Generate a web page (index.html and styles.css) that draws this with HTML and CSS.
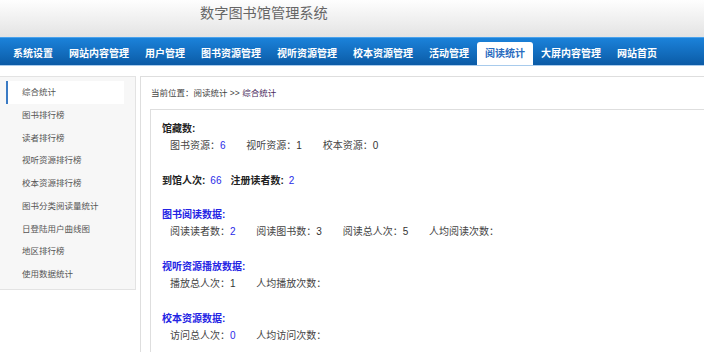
FILE: index.html
```html
<!DOCTYPE html>
<html>
	<head>
		<title>数字图书馆管理系统</title>
		<meta charset="utf-8">
		<link rel="stylesheet" href="styles.css">
	</head>
	<body>
		<header class="top">
			<h1>数字图书馆管理系统</h1>
		</header>
		<nav class="menu">
			<a href="#">系统设置</a>
			<a href="#">网站内容管理</a>
			<a href="#">用户管理</a>
			<a href="#">图书资源管理</a>
			<a href="#">视听资源管理</a>
			<a href="#">校本资源管理</a>
			<a href="#">活动管理</a>
			<a href="#" class="on">阅读统计</a>
			<a href="#">大屏内容管理</a>
			<a href="#">网站首页</a>
		</nav>
		<div class="wrap">
			<aside class="side">
				<a href="#" class="on">综合统计</a>
				<a href="#">图书排行榜</a>
				<a href="#">读者排行榜</a>
				<a href="#">视听资源排行榜</a>
				<a href="#">校本资源排行榜</a>
				<a href="#">图书分类阅读量统计</a>
				<a href="#">日登陆用户曲线图</a>
				<a href="#">地区排行榜</a>
				<a href="#">使用数据统计</a>
			</aside>
			<main class="content">
				<div class="crumb">当前位置：阅读统计 &gt;&gt; <span class="here">综合统计</span></div>
				<div class="box">
					<div class="group">
						<h3>馆藏数:</h3>
						<p class="row">
							<span class="item">图书资源：<span class="val link">6</span></span>
							<span class="item">视听资源：<span class="val">1</span></span>
							<span class="item">校本资源：<span class="val">0</span></span>
						</p>
					</div>
					<div class="group">
						<h3 class="pair">到馆人次:<span class="val link">66</span><span class="sub">注册读者数:</span><span class="val link">2</span></h3>
					</div>
					<div class="group">
						<h3 class="blue">图书阅读数据:</h3>
						<p class="row">
							<span class="item">阅读读者数：<span class="val link">2</span></span>
							<span class="item">阅读图书数：<span class="val">3</span></span>
							<span class="item">阅读总人次：<span class="val">5</span></span>
							<span class="item">人均阅读次数：</span>
						</p>
					</div>
					<div class="group">
						<h3 class="blue">视听资源播放数据:</h3>
						<p class="row">
							<span class="item">播放总人次：<span class="val">1</span></span>
							<span class="item">人均播放次数：</span>
						</p>
					</div>
					<div class="group">
						<h3 class="blue">校本资源数据:</h3>
						<p class="row">
							<span class="item">访问总人次：<span class="val link">0</span></span>
							<span class="item">人均访问次数：</span>
						</p>
					</div>
				</div>
			</main>
		</div>
	</body>
</html>
```
FILE: styles.css
```css
html, body {
	margin: 0;
	padding: 0;
	background: #fff;
	font-family: "Liberation Sans", "Noto Sans CJK SC", sans-serif;
	color: #333;
	overflow: hidden;
}
a {
	text-decoration: none;
}
.top {
	height: 37px;
	background: linear-gradient(#fefefe, #e3e3e3);
}
.top h1 {
	margin: 0;
	padding-left: 200px;
	font-size: 14.2px;
	line-height: 26px;
	font-weight: normal;
	color: #666;
}
.menu {
	display: flex;
	align-items: flex-end;
	height: 27px;
	padding-left: 5px;
	background: linear-gradient(#1b82da, #0b5ba6);
	border-top: 1px solid #4aa2ec;
	border-bottom: 1px solid #a8cbec;
}
.menu a {
	padding: 0 8px;
	line-height: 23px;
	font-size: 10px;
	font-weight: bold;
	color: #fff;
	white-space: nowrap;
}
.menu a.on {
	background: #fff;
	color: #2a6cc0;
	border-radius: 3px 3px 0 0;
}
.wrap {
	display: flex;
	align-items: flex-start;
	margin-top: 10px;
}
.side {
	flex: none;
	width: 135px;
	padding: 4px 0 3px;
	background: #f7f7f7;
	border: 1px solid #e3e3e3;
	border-left: none;
}
.side a {
	display: block;
	margin-left: 6px;
	width: 102px;
	padding-left: 14px;
	line-height: 22.75px;
	font-size: 8.5px;
	color: #555;
	border-left: 2px solid transparent;
}
.side a.on {
	background: #fff;
	border-left-color: #3b7bc4;
}
.content {
	flex: 1;
	margin-left: 4px;
	border-top: 1px solid #dedede;
	border-left: 1px solid #dedede;
}
.crumb {
	padding: 0 10px;
	line-height: 32px;
	font-size: 8.5px;
	color: #444;
}
.crumb .here {
	color: #4b2b5e;
}
.box {
	margin-left: 9px;
	padding: 10px 11px;
	border-top: 1px solid #dedede;
	border-left: 1px solid #dedede;
	font-size: 10px;
}
.group {
	margin-bottom: 17px;
}
.group h3 {
	margin: 0;
	font-size: 10px;
	line-height: 17px;
	color: #222;
}
.group h3.blue {
	color: #2424e4;
}
.pair .val {
	margin-left: 5px;
}
.pair .sub {
	margin-left: 9px;
}
.row {
	margin: 0;
	padding-left: 8px;
	line-height: 18px;
	color: #444;
}
.row .item {
	margin-right: 18px;
}
.val {
	font-weight: normal;
	color: #333;
}
.val.link {
	color: #2a2ae8;
}
```
